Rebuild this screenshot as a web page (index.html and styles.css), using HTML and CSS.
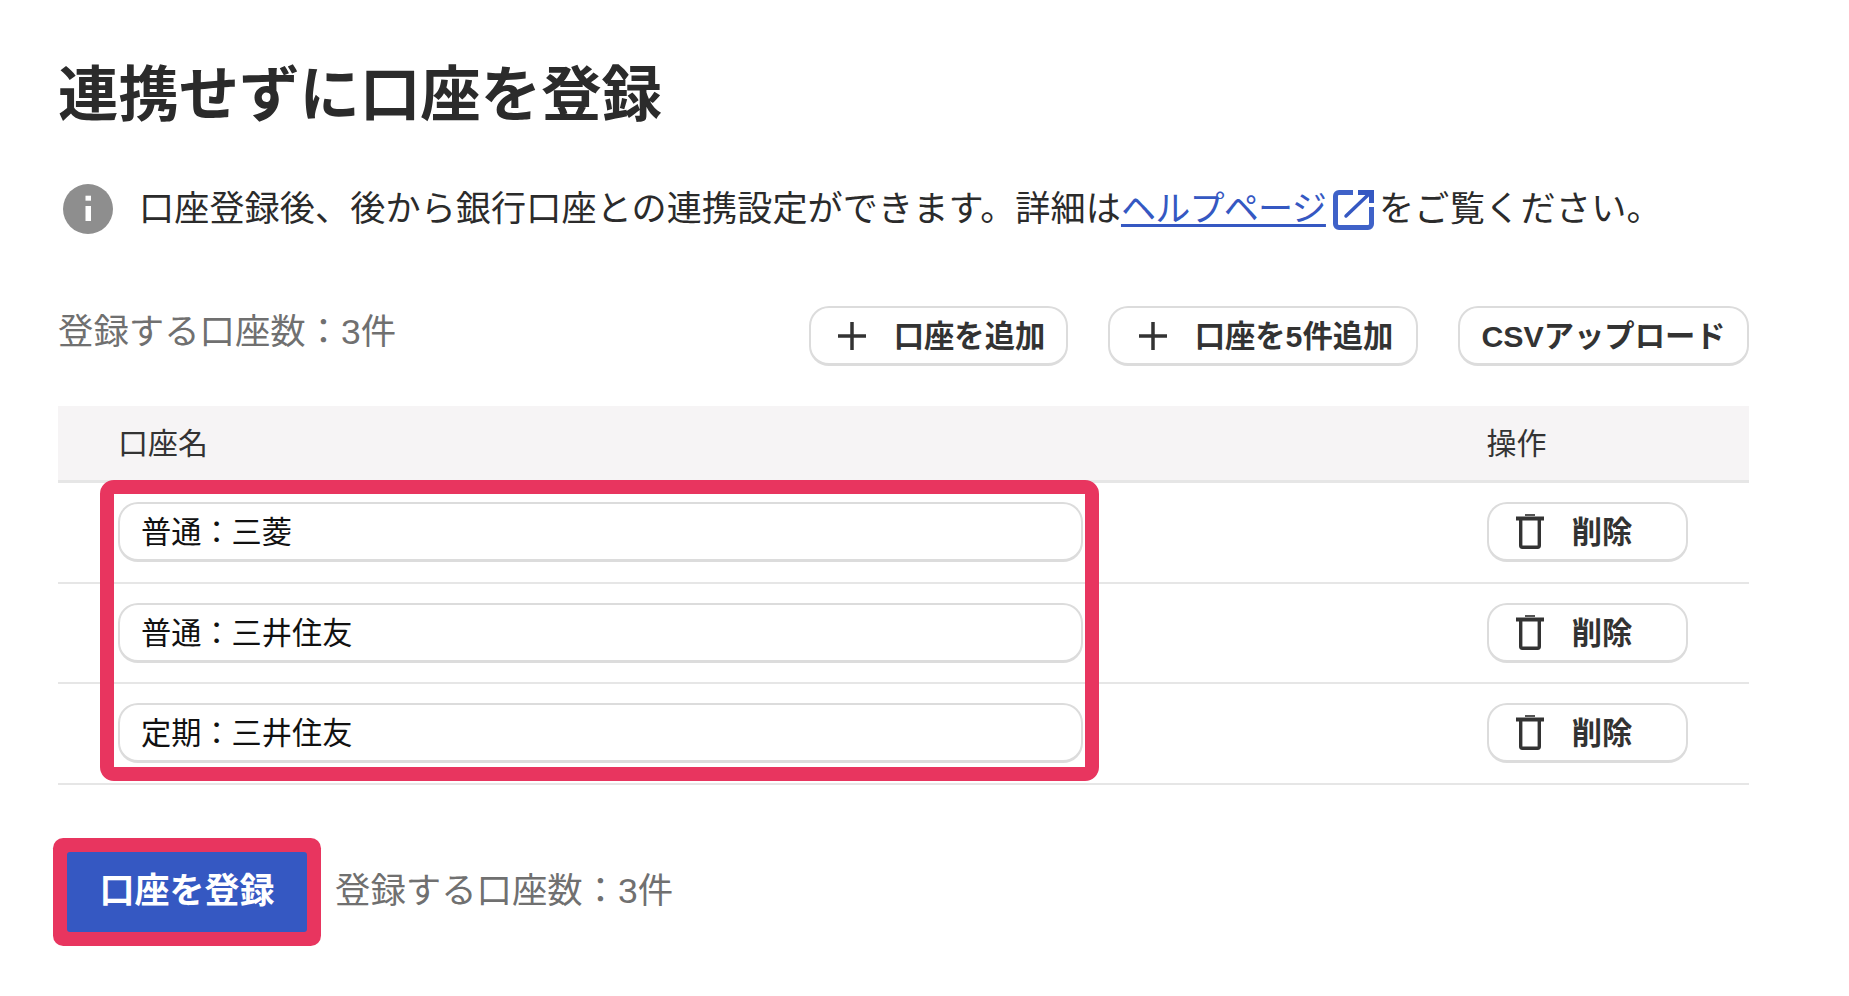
FILE: index.html
```html
<!DOCTYPE html>
<html lang="ja">
<head>
<meta charset="utf-8">
<title>連携せずに口座を登録</title>
<link rel="stylesheet" href="styles.css">
</head>
<body>
<main class="page">
  <h1 class="title">連携せずに口座を登録</h1>

  <p class="notice">
    <svg class="info-icon" viewBox="0 0 50 50" aria-hidden="true">
      <circle cx="25" cy="25" r="25" fill="#8e8e8e"/>
      <rect x="22.500" y="11.700" width="5.500" height="5" fill="#fff"/>
      <rect x="22.500" y="22" width="5.500" height="15" fill="#fff"/>
    </svg>
    <span class="notice-text">口座登録後、後から銀行口座との連携設定ができます。詳細は<a class="help-link" href="#">ヘルプページ</a><svg class="ext-icon" viewBox="0 0 41 40" aria-hidden="true">
      <path d="M20 2.500H6a3.500 3.500 0 0 0-3.500 3.500V34a3.500 3.500 0 0 0 3.500 3.500H35a3.500 3.500 0 0 0 3.500-3.500V17" fill="none" stroke="#3f62c8" stroke-width="5"/>
      <path d="M13 26L36 4" fill="none" stroke="#3558c2" stroke-width="3.500" stroke-linecap="round"/>
      <path d="M25 2.500H38.500V13" fill="none" stroke="#3558c2" stroke-width="5"/>
    </svg><span class="notice-tail">をご覧ください。</span></span>
  </p>

  <div class="toolbar">
    <span class="count">登録する口座数：3件</span>
    <div class="actions">
      <button class="btn btn-add" type="button"><svg class="plus" viewBox="0 0 28 28" aria-hidden="true"><path d="M14 0V28M0 14H28" stroke="#333" stroke-width="3.500"/></svg>口座を追加</button>
      <button class="btn btn-add5" type="button"><svg class="plus" viewBox="0 0 28 28" aria-hidden="true"><path d="M14 0V28M0 14H28" stroke="#333" stroke-width="3.500"/></svg>口座を5件追加</button>
      <button class="btn btn-csv" type="button">CSVアップロード</button>
    </div>
  </div>

  <div class="table">
    <div class="row head">
      <div class="cell-name">口座名</div>
      <div class="cell-op">操作</div>
    </div>
    <div class="row">
      <div class="cell-name"><div class="field">普通：三菱</div></div>
      <div class="cell-op"><button class="btn btn-del" type="button"><svg class="trash" viewBox="0 0 28 35" aria-hidden="true"><path d="M9 1H19" stroke="#555" stroke-width="2" fill="none"/><path d="M0 4.500H28" stroke="#333" stroke-width="4" fill="none"/><path d="M4.700 6V31.500a1.700 1.700 0 0 0 1.700 1.700H21.600a1.700 1.700 0 0 0 1.700-1.700V6" stroke="#333" stroke-width="3.400" fill="none"/></svg>削除</button></div>
    </div>
    <div class="row">
      <div class="cell-name"><div class="field">普通：三井住友</div></div>
      <div class="cell-op"><button class="btn btn-del" type="button"><svg class="trash" viewBox="0 0 28 35" aria-hidden="true"><path d="M9 1H19" stroke="#555" stroke-width="2" fill="none"/><path d="M0 4.500H28" stroke="#333" stroke-width="4" fill="none"/><path d="M4.700 6V31.500a1.700 1.700 0 0 0 1.700 1.700H21.600a1.700 1.700 0 0 0 1.700-1.700V6" stroke="#333" stroke-width="3.400" fill="none"/></svg>削除</button></div>
    </div>
    <div class="row">
      <div class="cell-name"><div class="field">定期：三井住友</div></div>
      <div class="cell-op"><button class="btn btn-del" type="button"><svg class="trash" viewBox="0 0 28 35" aria-hidden="true"><path d="M9 1H19" stroke="#555" stroke-width="2" fill="none"/><path d="M0 4.500H28" stroke="#333" stroke-width="4" fill="none"/><path d="M4.700 6V31.500a1.700 1.700 0 0 0 1.700 1.700H21.600a1.700 1.700 0 0 0 1.700-1.700V6" stroke="#333" stroke-width="3.400" fill="none"/></svg>削除</button></div>
    </div>
    <div class="highlight"></div>
  </div>

  <div class="submit-row">
    <button class="submit" type="button">口座を登録</button>
    <span class="count">登録する口座数：3件</span>
  </div>
</main>
</body>
</html>
```

FILE: styles.css
```css
* { box-sizing: border-box; }

html, body {
  margin: 0;
  background: #fff;
}

body {
  font-family: "Liberation Sans", "Noto Sans CJK JP", sans-serif;
  color: #2b2b2b;
}

.page {
  width: 1849px;
  height: 996px;
  padding: 0 100px 0 58px;
  overflow: hidden;
}

.title {
  margin: 0;
  padding-top: 55px;
  height: 132px;
  font-size: 60.400px;
  line-height: 80px;
  font-weight: 700;
  white-space: nowrap;
}

.notice {
  margin: 52px 0 0 5px;
  display: flex;
  align-items: center;
  height: 50px;
}

.info-icon {
  width: 50px;
  height: 50px;
  flex: none;
}

.notice-text {
  margin-left: 26px;
  font-size: 35.100px;
  line-height: 50px;
  letter-spacing: 0.130px;
  color: #2b2b2b;
  white-space: nowrap;
}

.help-link {
  color: #3558c2;
  letter-spacing: -0.800px;
  text-decoration: underline;
  text-decoration-thickness: 3px;
  text-underline-offset: 3px;
}

.ext-icon {
  display: inline-block;
  width: 41px;
  height: 40px;
  margin-left: 7px;
  vertical-align: -9px;
}

.notice-tail {
  margin-left: 5px;
  letter-spacing: 0.300px;
}

.toolbar {
  margin-top: 72px;
  display: flex;
  justify-content: space-between;
  align-items: flex-start;
}

.toolbar .count {
  padding-top: 1px;
}

.count {
  font-size: 35.400px;
  line-height: 50px;
  color: #707070;
  white-space: nowrap;
}

.actions {
  display: flex;
  gap: 40px;
}

.btn {
  height: 60px;
  padding: 0 0 3px;
  display: flex;
  align-items: center;
  justify-content: center;
  background: #fff;
  border: 2px solid #dcdcdc;
  border-bottom-width: 3px;
  border-radius: 20px;
  font-family: inherit;
  font-size: 30.300px;
  font-weight: 700;
  color: #333;
  white-space: nowrap;
}

.btn-add { width: 259px; padding-left: 6px; }
.btn-add5 { width: 310px; padding-left: 6px; }
.btn-csv { width: 291px; }
.btn-del { width: 201px; padding-right: 26px; }

.plus {
  width: 28px;
  height: 28px;
  margin-top: 3px;
  margin-right: 28px;
  flex: none;
}

.trash {
  width: 28px;
  height: 35px;
  margin-top: 3px;
  margin-right: 28px;
  flex: none;
}

.table {
  position: relative;
  margin-top: 40px;
}

.row {
  display: flex;
  align-items: center;
  height: 100.500px;
  border-bottom: 2px solid #e6e6e6;
}

.head {
  height: 77px;
  padding-bottom: 4px;
  background: #f6f4f5;
  border-bottom-width: 3px;
  font-size: 30px;
  color: #333;
}

.cell-name {
  width: 1428.500px;
  padding-left: 60px;
}

.cell-op {
  flex: 1;
}

.field {
  width: 965px;
  height: 60px;
  padding: 0 0 3px 21px;
  display: flex;
  align-items: center;
  background: #fff;
  border: 2px solid #dcdcdc;
  border-bottom-width: 3px;
  border-radius: 20px;
  font-size: 30.200px;
  color: #111;
}

.highlight {
  position: absolute;
  left: 42px;
  top: 74px;
  width: 999px;
  height: 301px;
  border: 14px solid #e8355f;
  border-radius: 14px;
  pointer-events: none;
}

.submit-row {
  margin-top: 67px;
  margin-left: 9px;
  display: flex;
  align-items: center;
  gap: 28px;
}

.submit-row .count {
  padding-bottom: 2px;
}

.submit {
  width: 240px;
  height: 80px;
  padding: 0 0 8px;
  background: #3558c2;
  border: 0;
  border-radius: 3px;
  box-shadow: 0 0 0 14px #e8355f;
  font-family: inherit;
  font-size: 35px;
  font-weight: 700;
  color: #fff;
}
```
